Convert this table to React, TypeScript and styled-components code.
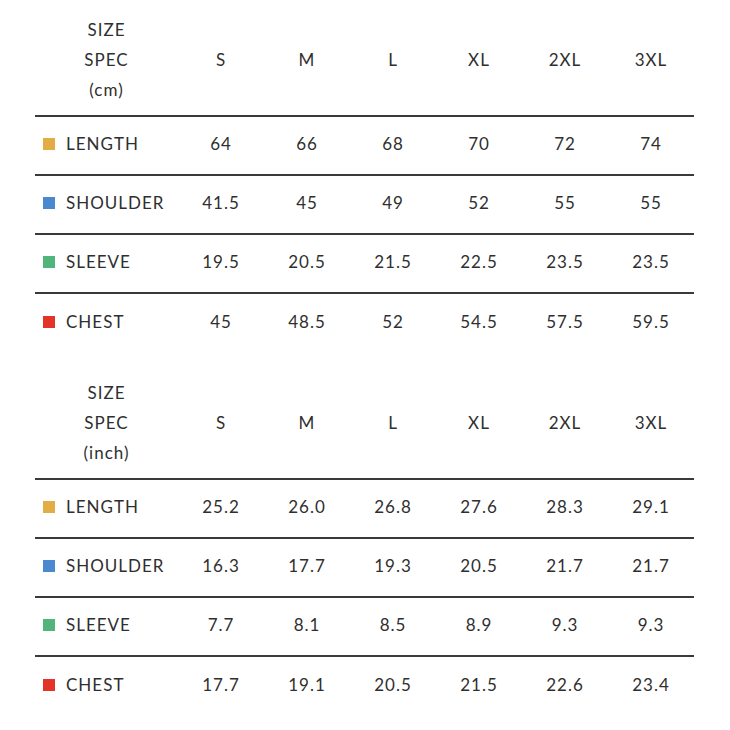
import styled, { createGlobalStyle } from "styled-components"

const GlobalStyle = createGlobalStyle`
  body {
    margin: 0;
    background: #ffffff;
    font-family: Lato, "Open Sans", "Liberation Sans", sans-serif;
    color: #2f2f2f;
  }
`

const Page = styled.div`
  display: flex;
  flex-direction: column;
  gap: 10px;
  padding: 0 36px 0 35px;
`

const Table = styled.div`
  display: grid;
  grid-template-columns: 143px repeat(6, 86px);
  width: 659px;
`

const HeadCell = styled.div`
  display: flex;
  flex-direction: column;
  align-items: center;
  justify-content: center;
  padding: 15px 0 10px;
  border-bottom: 2px solid #3a3a3a;
  font-size: 17px;
  line-height: 30px;
  letter-spacing: 1px;
`

const Cell = styled.div<{ $last?: boolean }>`
  display: flex;
  align-items: center;
  justify-content: center;
  box-sizing: border-box;
  height: 59px;
  padding-bottom: 4px;
  border-bottom: ${({ $last }) => ($last ? "none" : "2px solid #3a3a3a")};
  font-size: 17px;
  letter-spacing: 1px;
`

const LabelCell = styled(Cell)`
  justify-content: flex-start;
  padding-left: 8px;
  gap: 11px;
`

const Swatch = styled.span<{ $color: string }>`
  width: 12px;
  height: 12px;
  flex: none;
  background: ${({ $color }) => $color};
`

interface Spec {
  label: string
  color: string
  values: string[]
}

const sizes = ["S", "M", "L", "XL", "2XL", "3XL"]

const cmRows: Spec[] = [
  { label: "LENGTH", color: "#e3ad45", values: ["64", "66", "68", "70", "72", "74"] },
  { label: "SHOULDER", color: "#4a88cf", values: ["41.5", "45", "49", "52", "55", "55"] },
  { label: "SLEEVE", color: "#50b47b", values: ["19.5", "20.5", "21.5", "22.5", "23.5", "23.5"] },
  { label: "CHEST", color: "#e3342a", values: ["45", "48.5", "52", "54.5", "57.5", "59.5"] },
]

const inchRows: Spec[] = [
  { label: "LENGTH", color: "#e3ad45", values: ["25.2", "26.0", "26.8", "27.6", "28.3", "29.1"] },
  { label: "SHOULDER", color: "#4a88cf", values: ["16.3", "17.7", "19.3", "20.5", "21.7", "21.7"] },
  { label: "SLEEVE", color: "#50b47b", values: ["7.7", "8.1", "8.5", "8.9", "9.3", "9.3"] },
  { label: "CHEST", color: "#e3342a", values: ["17.7", "19.1", "20.5", "21.5", "22.6", "23.4"] },
]

function SizeTable({ unit, rows }: { unit: string, rows: Spec[] }) {
  return (
    <Table>
      <HeadCell>
        <span>SIZE</span>
        <span>SPEC</span>
        <span>({unit})</span>
      </HeadCell>
      {sizes.map((s) => (
        <HeadCell key={s}>{s}</HeadCell>
      ))}
      {rows.map((row, i) => {
        const last = i === rows.length - 1
        return [
          <LabelCell key={row.label} $last={last}>
            <Swatch $color={row.color} />
            {row.label}
          </LabelCell>,
          ...row.values.map((v, j) => (
            <Cell key={row.label + j} $last={last}>{v}</Cell>
          )),
        ]
      })}
    </Table>
  )
}

export default function App() {
  return (
    <>
      <GlobalStyle />
      <Page>
        <SizeTable unit="cm" rows={cmRows} />
        <SizeTable unit="inch" rows={inchRows} />
      </Page>
    </>
  )
}
